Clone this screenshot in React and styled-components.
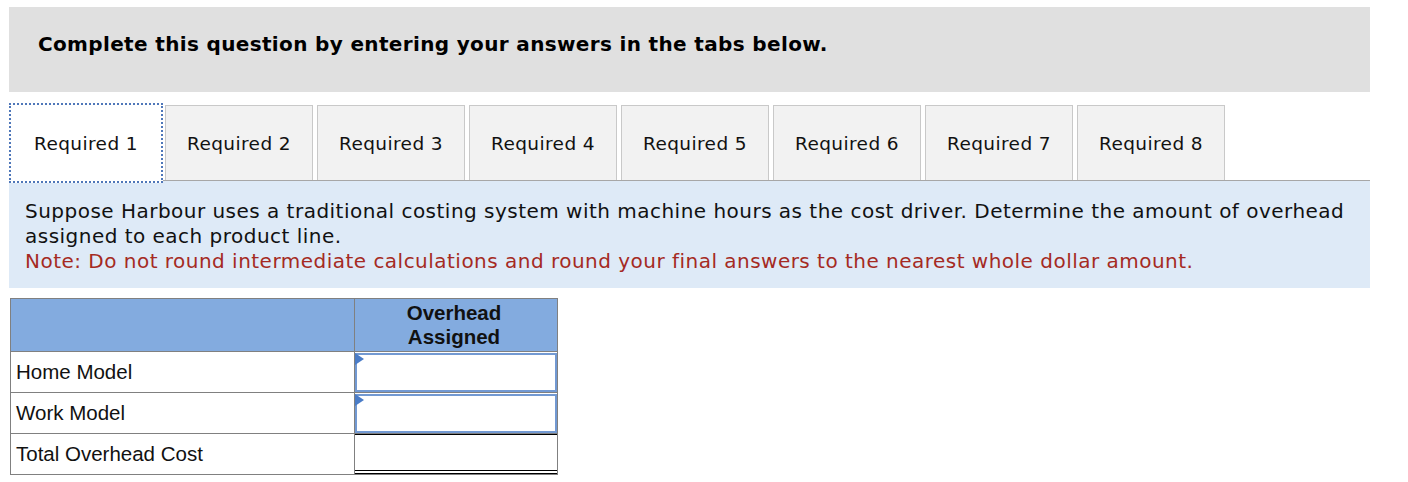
import React from 'react';
import styled, { createGlobalStyle } from 'styled-components';

const GlobalStyle = createGlobalStyle`
  body {
    margin: 0;
    background: #ffffff;
    font-family: 'DejaVu Sans', Verdana, sans-serif;
  }
`;

const Page = styled.div`
  padding: 7px 38px 0 9px;
  width: 1361px;
`;

const Banner = styled.div`
  background: #e0e0e0;
  height: 85px;
  display: flex;
  align-items: center;
  padding-left: 29px;
  padding-bottom: 11px;
  box-sizing: border-box;
  font-weight: bold;
  font-size: 20px;
  letter-spacing: 0.35px;
  color: #000;
`;

const TabRow = styled.div`
  display: flex;
  gap: 4px;
  margin-top: 11px;
  height: 77px;
  align-items: flex-end;
`;

const Tab = styled.div`
  width: 148px;
  height: 75px;
  box-sizing: border-box;
  display: flex;
  align-items: center;
  justify-content: center;
  font-size: 18.5px;
  letter-spacing: 0.4px;
  color: #111;
  background: ${(p) => (p.active ? '#ffffff' : '#f2f2f2')};
  border: ${(p) => (p.active ? '2px dotted #4f77b9' : '1px solid #c9c9c9')};
  border-bottom: ${(p) => (p.active ? '2px dotted #4f77b9' : 'none')};
  ${(p) => p.active && `height: 80px; width: 154px; margin-bottom: -3px; position: relative; z-index: 1; margin-right: -2px;`}
`;

const Panel = styled.div`
  background: #deeaf7;
  border-top: 1px solid #a7a7a7;
  padding: 18px 16px 14px 16px;
  font-size: 20px;
  letter-spacing: 0.48px;
  line-height: 25px;
  color: #111;
`;

const Note = styled.div`
  color: #a52a23;
`;

const Table = styled.table`
  margin-top: 10px;
  margin-left: 1px;
  border-collapse: collapse;
  font-family: 'Liberation Sans', Arial, sans-serif;
  font-size: 20.5px;
  color: #111;
`;

const HeadCell = styled.th`
  background: #83abdf;
  border: 1px solid #808080;
  height: 52px;
  padding: 0 4px 0 0;
  font-weight: bold;
  line-height: 24px;
  width: ${(p) => p.w}px;
`;

const LabelCell = styled.td`
  border: 1px solid #808080;
  height: 40px;
  padding: 0 0 0 5px;
`;

const InputCell = styled.td`
  border: 1px solid #808080;
  padding: 0;
  height: 40px;
`;

const InputBox = styled.div`
  position: relative;
  height: 39px;
  box-sizing: border-box;
  border: 2px solid #7299d2;
  background: #fff;
`;

const TotalBox = styled.div`
  height: 40px;
  box-sizing: border-box;
  border-top: 1px solid #000;
  border-bottom: 4px double #000;
`;

const Marker = styled.span`
  position: absolute;
  left: -2px;
  top: -2px;
  width: 0;
  height: 0;
  border-top: 6px solid transparent;
  border-bottom: 6px solid transparent;
  border-left: 9px solid #4a7cc7;
`;

const tabs = [1, 2, 3, 4, 5, 6, 7, 8];

const rows = [
  { label: 'Home Model', input: true },
  { label: 'Work Model', input: true },
  { label: 'Total Overhead Cost', input: false },
];

const App = () => (
  <>
    <GlobalStyle />
    <Page>
      <Banner>Complete this question by entering your answers in the tabs below.</Banner>
      <TabRow>
        {tabs.map((n) => (
          <Tab key={n} active={n === 1}>
            Required {n}
          </Tab>
        ))}
      </TabRow>
      <Panel>
        Suppose Harbour uses a traditional costing system with machine hours as the cost driver. Determine the amount of overhead assigned to each product line.
        <Note>Note: Do not round intermediate calculations and round your final answers to the nearest whole dollar amount.</Note>
      </Panel>
      <Table>
        <thead>
          <tr>
            <HeadCell w={339} />
            <HeadCell w={198}>
              Overhead
              <br />
              Assigned
            </HeadCell>
          </tr>
        </thead>
        <tbody>
          {rows.map((r) => (
            <tr key={r.label}>
              <LabelCell>{r.label}</LabelCell>
              <InputCell>
                {r.input ? (
                  <InputBox>
                    <Marker />
                  </InputBox>
                ) : (
                  <TotalBox />
                )}
              </InputCell>
            </tr>
          ))}
        </tbody>
      </Table>
    </Page>
  </>
);

export default App;
